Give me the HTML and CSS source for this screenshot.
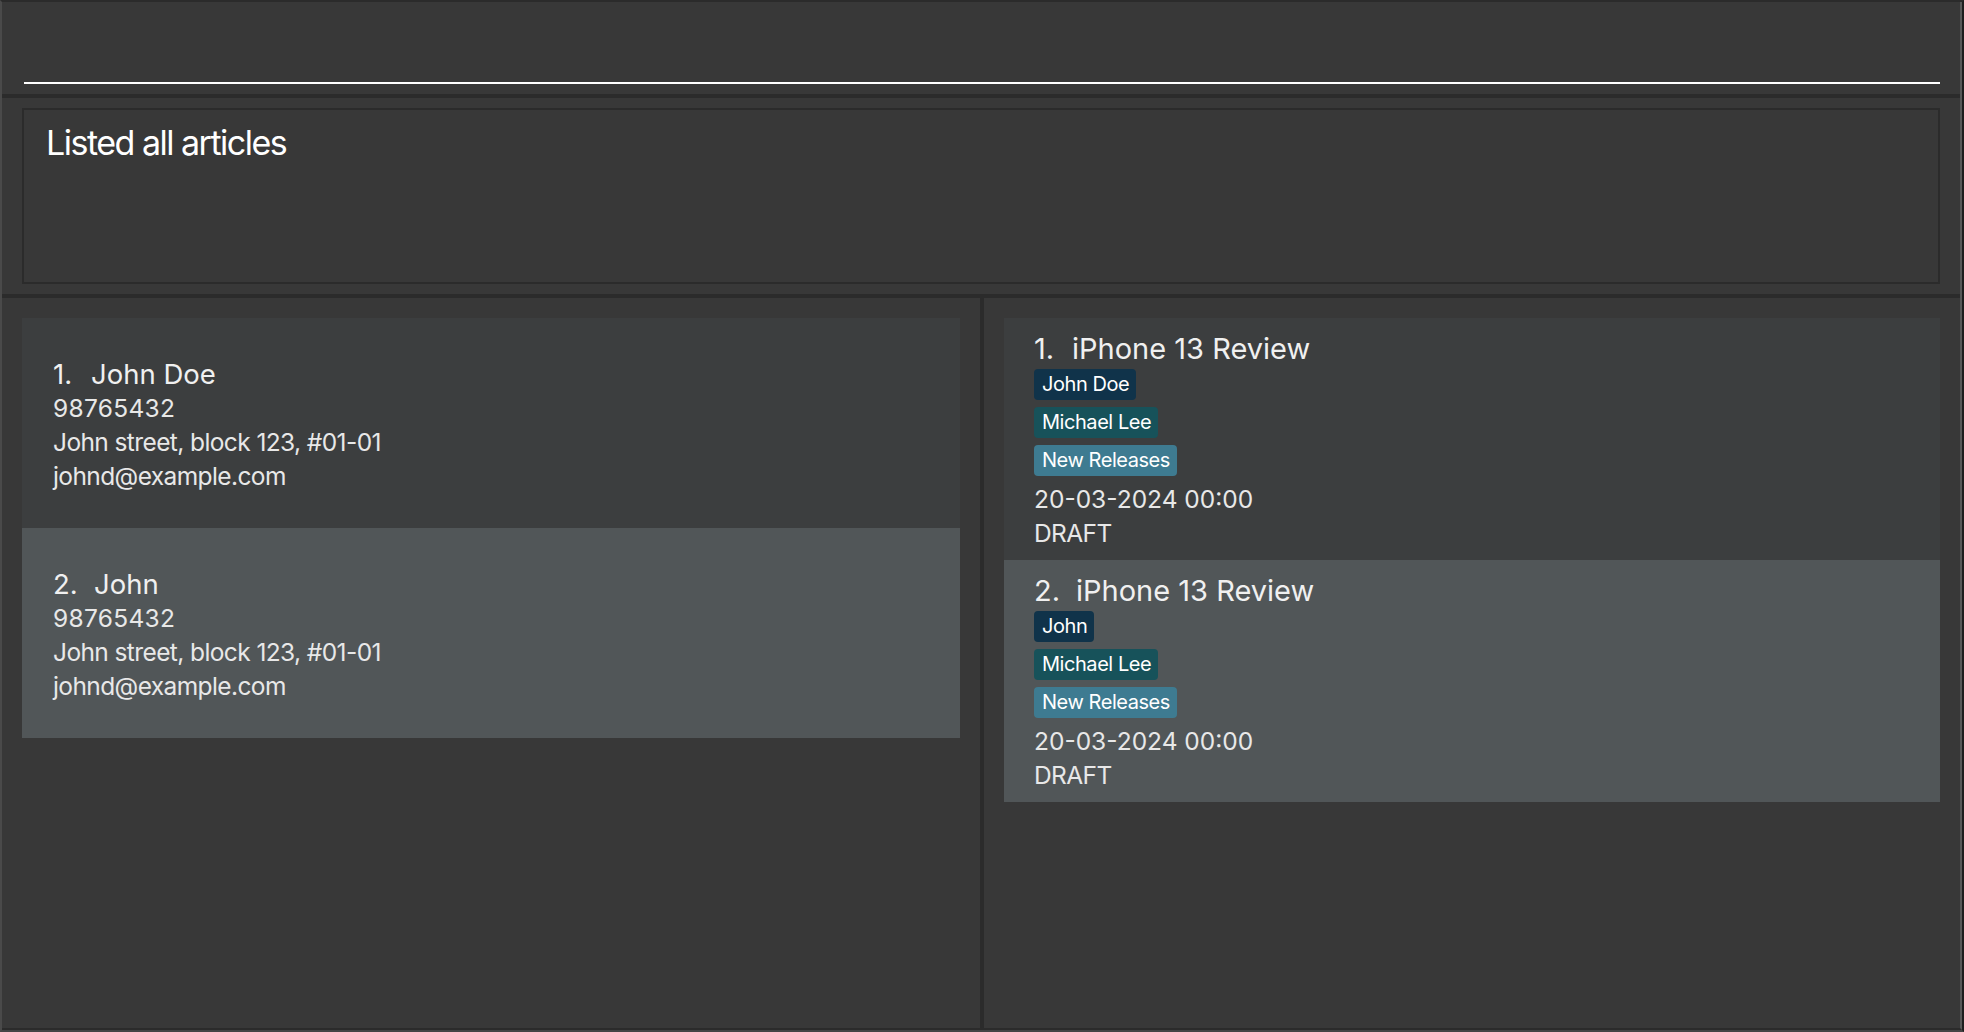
FILE: index.html
```html
<!DOCTYPE html>
<html lang="en">
<head>
<meta charset="utf-8">
<title>Articles</title>
<link rel="stylesheet" href="styles.css">
</head>
<body>
<div class="window">
  <div class="frame">
    <div class="command">
      <div class="command-field"></div>
    </div>
    <div class="sep"></div>
    <div class="result-pane">
      <div class="result-box">Listed all articles</div>
    </div>
    <div class="sep"></div>
    <div class="lists">
      <div class="panel panel-left">
        <div class="person-card even">
          <div class="title"><span class="idx">1.</span><span>John Doe</span></div>
          <div class="detail phone">98765432</div>
          <div class="detail">John street, block 123, #01-01</div>
          <div class="detail">johnd@example.com</div>
        </div>
        <div class="person-card odd">
          <div class="title"><span class="idx idx-wide">2.</span><span>John</span></div>
          <div class="detail phone">98765432</div>
          <div class="detail">John street, block 123, #01-01</div>
          <div class="detail">johnd@example.com</div>
        </div>
      </div>
      <div class="vdivider"></div>
      <div class="panel panel-right">
        <div class="article-card even">
          <div class="title big"><span class="idx">1.</span><span>iPhone 13 Review</span></div>
          <div class="tags">
            <span class="tag tag-author">John Doe</span>
            <span class="tag tag-source">Michael Lee</span>
            <span class="tag tag-category">New Releases</span>
          </div>
          <div class="detail date">20-03-2024 00:00</div>
          <div class="detail">DRAFT</div>
        </div>
        <div class="article-card odd">
          <div class="title big"><span class="idx idx-wide">2.</span><span>iPhone 13 Review</span></div>
          <div class="tags">
            <span class="tag tag-author">John</span>
            <span class="tag tag-source">Michael Lee</span>
            <span class="tag tag-category">New Releases</span>
          </div>
          <div class="detail date">20-03-2024 00:00</div>
          <div class="detail">DRAFT</div>
        </div>
      </div>
    </div>
  </div>
</div>
</body>
</html>
```

FILE: styles.css
```css
* { box-sizing: border-box; }

html, body {
  margin: 0;
  padding: 0;
  background: #383838;
  overflow: hidden;
}

body {
  font-family: Inter, "Noto Sans", "Liberation Sans", sans-serif;
  color: #ececec;
}

.window {
  width: 1964px;
  height: 1032px;
  border-top: 2px solid #2b2b2b;
  border-left: 2px solid #4a4a4a;
  border-right: 2px solid #1e1e1e;
  border-bottom: 2px solid #454545;
  background: #383838;
}

.frame {
  height: 100%;
  display: flex;
  flex-direction: column;
  border-right: 2px solid #585858;
  border-bottom: 2px solid #2b2b2b;
}

.command {
  height: 92px;
  padding: 0 20px 0 22px;
}

.command-field {
  height: 82px;
  border-bottom: 2px solid #ffffff;
}

.sep {
  height: 4px;
  background: #2b2b2b;
  flex: none;
}

.result-pane {
  height: 196px;
  padding: 10px 20px;
  flex: none;
}

.result-box {
  height: 176px;
  border: 2px solid #2b2b2b;
  padding: 11px 0 0 22px;
  font-size: 34px;
  line-height: 44px;
  letter-spacing: -1.5px;
  color: #ffffff;
}

.lists {
  flex: 1;
  display: flex;
  min-height: 0;
}

.panel {
  padding: 20px;
  display: flex;
  flex-direction: column;
}

.panel-left { width: 978px; }
.panel-right { flex: 1; }

.vdivider {
  width: 4px;
  background: #2b2b2b;
  flex: none;
}

.even { background: #3c3e3f; }
.odd { background: #515658; }

.person-card {
  height: 210px;
  padding: 39px 0 35px 31px;
}

.article-card {
  height: 242px;
  padding: 13px 0 10px 30px;
}

.title {
  font-size: 27.5px;
  line-height: 34px;
  color: #f0f0f0;
  white-space: nowrap;
}

.title .idx {
  display: inline-block;
  width: 38px;
}

.title .idx-wide {
  width: 41px;
}

.title.big {
  font-size: 29px;
  line-height: 36px;
}

.title.big .idx {
  width: 38px;
}

.title.big .idx-wide {
  width: 42px;
}

.detail {
  font-size: 24.5px;
  line-height: 34px;
  color: #e8e8e8;
  white-space: nowrap;
  letter-spacing: -0.6px;
}

.detail.phone {
  letter-spacing: 0.3px;
}

.detail.date {
  letter-spacing: 0;
  margin-top: 6px;
}

.tags {
  margin-top: 2px;
  display: flex;
  flex-direction: column;
  align-items: flex-start;
  gap: 7px;
}

.tag {
  height: 31px;
  line-height: 31px;
  padding: 0 7px 0 8px;
  font-size: 20px;
  letter-spacing: -0.45px;
  border-radius: 4px;
  color: #ffffff;
}

.tag-author { background: #10334a; }
.tag-source { background: #17525a; }
.tag-category { background: #3e7b91; }
```
